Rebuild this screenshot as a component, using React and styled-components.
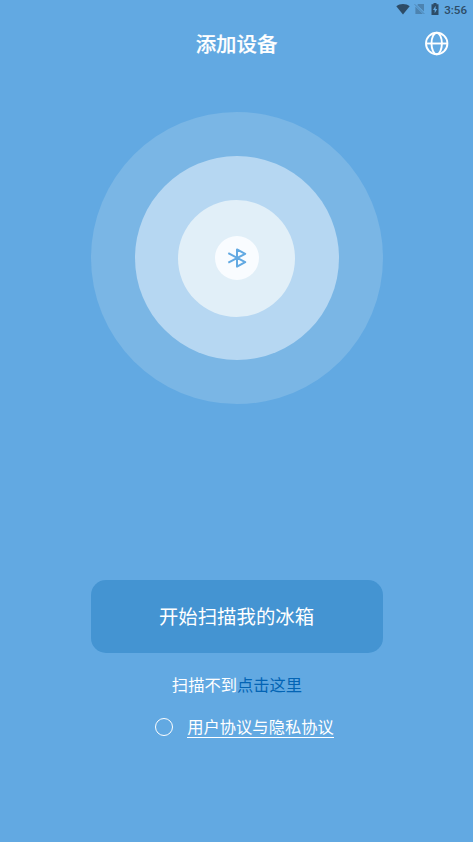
import React, { useState } from 'react';
import styled, { createGlobalStyle } from 'styled-components';

function App() {
  const [agreed, setAgreed] = useState(false);
  return (
    <Page>
      <GlobalStyle />
      <StatusBar>
        <WifiIcon viewBox="0 0 14 12">
          <path d="M0.3 3.2C4 0.2 10 0.2 13.7 3.2L7 11.4Z" />
        </WifiIcon>
        <NoSimIcon viewBox="0 0 11 12">
          <path d="M4.2 1H10V8.6L3.2 2ZM1.4 3.4L9 11H1.4Z" />
          <path d="M0.6 1.2L10.4 11" fill="none" stroke="#2d4c67" strokeWidth="0.9" />
        </NoSimIcon>
        <BatteryIcon viewBox="0 0 8 12">
          <path d="M2.5 0H5.5V1.3H7.5V12H0.5V1.3H2.5Z" />
          <path d="M4.6 2.8L2 7H3.7V10.3L6.2 6H4.6Z" fill="#62a9e2" />
        </BatteryIcon>
        <Clock>3:56</Clock>
      </StatusBar>
      <Header>
        <Title>添加设备</Title>
        <LanguageButton aria-label="语言">
          <svg viewBox="0 0 24 24">
            <circle cx="11.7" cy="12.5" r="10.7" />
            <ellipse cx="11.7" cy="12.5" rx="5.2" ry="10.7" />
            <path d="M1 12.5H22.4" />
          </svg>
        </LanguageButton>
      </Header>
      <Radar>
        <Ring size={292} color="#7ab6e5">
          <Ring size={204} color="#b6d7f2">
            <Ring size={117} color="#e1eff8">
              <Ring size={44} color="#f9fcff">
                <BluetoothIcon viewBox="0 0 20 20">
                  <path d="M1.3 5.2L18.2 14.2L10 18.6V1.4L18.2 5.8L1.3 14.6" />
                </BluetoothIcon>
              </Ring>
            </Ring>
          </Ring>
        </Ring>
      </Radar>
      <ScanButton>开始扫描我的冰箱</ScanButton>
      <Hint>扫描不到<a>点击这里</a></Hint>
      <Agreement>
        <Radio checked={agreed} onChange={() => setAgreed(!agreed)} />
        <a>用户协议与隐私协议</a>
      </Agreement>
    </Page>
  );
}

const GlobalStyle = createGlobalStyle`
  body{
    margin:0;
    background:#62a9e2;
  }
  *{
    box-sizing:border-box;
  }
`
const Page = styled.div`
  display:flex;
  flex-direction:column;
  align-items:center;
  height:842px;
  overflow:hidden;
  background:#62a9e2;
  color:#fff;
  font-family:"Noto Sans CJK SC", sans-serif;
`
const StatusBar = styled.div`
  display:flex;
  align-items:center;
  align-self:stretch;
  justify-content:flex-end;
  height:18px;
  padding-right:6px;
  svg{
    fill:#2d4c67;
  }
`
const WifiIcon = styled.svg`
  width:14px;
  height:12px;
`
const NoSimIcon = styled.svg`
  width:11px;
  height:12px;
  margin-left:4px;
  opacity:0.4;
`
const BatteryIcon = styled.svg`
  width:8px;
  height:12px;
  margin-left:6px;
`
const Clock = styled.span`
  margin-left:5px;
  padding-top:1px;
  color:#2d4c67;
  font:500 11.6px/16px Roboto, sans-serif;
`
const Header = styled.header`
  display:grid;
  grid-template-columns:1fr auto 1fr;
  align-items:center;
  align-self:stretch;
  height:50px;
  padding:0 24px;
`
const Title = styled.h1`
  grid-column:2;
  margin:0;
  font-size:20.4px;
  font-weight:500;
  line-height:30px;
  -webkit-text-stroke:0.2px #fff;
`
const LanguageButton = styled.button`
  justify-self:end;
  width:24px;
  height:24px;
  padding:0;
  border:0;
  background:none;
  cursor:pointer;
  svg{
    display:block;
    width:24px;
    height:24px;
    overflow:visible;
    fill:none;
    stroke:#fff;
    stroke-width:1.9;
  }
`
const Radar = styled.div`
  margin-top:44px;
`
const Ring = styled.div`
  display:flex;
  align-items:center;
  justify-content:center;
  width:${(props) => props.size}px;
  height:${(props) => props.size}px;
  border-radius:50%;
  background:${(props) => props.color};
`
const BluetoothIcon = styled.svg`
  width:20px;
  height:20px;
  fill:none;
  stroke:#62a9e2;
  stroke-width:2;
  stroke-linejoin:round;
`
const ScanButton = styled.button`
  width:292px;
  height:73px;
  margin-top:176px;
  padding:0 0 2px;
  border:0;
  border-radius:15px;
  background:#4494d2;
  color:#fff;
  font-family:inherit;
  font-size:19.4px;
  font-weight:400;
  cursor:pointer;
`
const Hint = styled.p`
  margin:19px 0 0;
  padding-left:1px;
  font-size:16.3px;
  line-height:24px;
  a{
    color:#0364b4;
    cursor:pointer;
  }
`
const Agreement = styled.label`
  display:flex;
  align-items:center;
  margin-top:19px;
  padding-left:16px;
  font-size:16.3px;
  a{
    height:23px;
    line-height:22px;
    border-bottom:1px solid #fff;
  }
`
const Radio = styled.input.attrs({ type: 'checkbox' })`
  appearance:none;
  width:18px;
  height:18px;
  margin:0 14px 0 0;
  border:1px solid #fff;
  border-radius:50%;
  &:checked{
    background:#4494d2;
  }
`

export default App;
